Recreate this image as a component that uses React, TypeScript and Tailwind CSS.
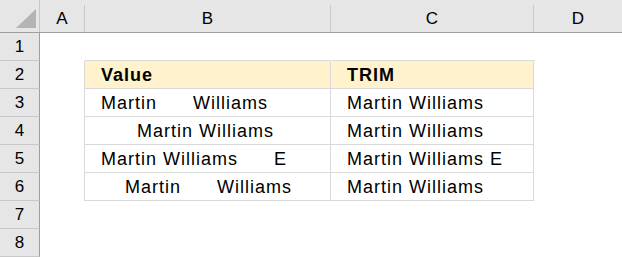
const cols = ["A", "B", "C", "D"];

const rows: { b: string; c: string; head?: boolean }[] = [
  { b: "Value", c: "TRIM", head: true },
  { b: "Martin      Williams", c: "Martin Williams" },
  { b: "      Martin Williams", c: "Martin Williams" },
  { b: "Martin Williams      E", c: "Martin Williams E" },
  { b: "    Martin      Williams", c: "Martin Williams" },
];

function RowHead({ n }: { n: number }) {
  return (
    <div className="flex h-[28px] w-[40px] shrink-0 items-center justify-center border-b border-r border-b-[#c8c8c8] border-r-[#9e9e9e] bg-[#e6e6e6] text-[17px]">
      {n}
    </div>
  );
}

export default function App() {
  return (
    <div className="h-[257px] w-[622px] overflow-hidden bg-white font-['Liberation_Sans',Arial,sans-serif] text-black">
      {/* column header */}
      <div className="flex h-[33px] border-b border-[#9e9e9e] bg-[#e6e6e6]">
        <div className="relative w-[40px] shrink-0 border-r border-[#c8c8c8]">
          <svg className="absolute left-[16px] top-[9px]" width="20" height="19" viewBox="0 0 20 19">
            <polygon points="20,0 20,19 0,19" fill="#b4b4b4" />
          </svg>
        </div>
        {cols.map((c, i) => (
          <div
            key={c}
            className={
              "mt-[5px] flex items-center justify-center text-[17px] " +
              (i === 0
                ? "w-[45px] border-r border-[#c8c8c8]"
                : i === 1
                ? "w-[246px] border-r border-[#c8c8c8]"
                : i === 2
                ? "w-[203px] border-r border-[#c8c8c8]"
                : "flex-1")
            }
          >
            {c}
          </div>
        ))}
      </div>

      {/* row 1 */}
      <div className="flex">
        <RowHead n={1} />
        <div className="w-[45px] shrink-0" />
        <div className="w-[246px] shrink-0 border-b border-[#d9d9d9]" />
        <div className="ml-[1px] w-[203px] shrink-0 border-b border-[#d9d9d9]" />
      </div>

      {rows.map((r, i) => (
        <div key={i} className="flex">
          <RowHead n={i + 2} />
          <div className="w-[45px] shrink-0 border-r border-[#d9d9d9]" />
          <div
            className={
              "flex h-[28px] w-[246px] shrink-0 items-center whitespace-pre border-b border-r border-[#d9d9d9] pl-[16px] pt-[2px] text-[18px] tracking-[1px] " +
              (r.head ? "bg-[#fff2cc] font-bold" : "")
            }
          >
            {r.b}
          </div>
          <div
            className={
              "flex h-[28px] w-[203px] shrink-0 items-center whitespace-pre border-b border-r border-[#d9d9d9] pl-[16px] pt-[2px] text-[18px] tracking-[1px] " +
              (r.head ? "bg-[#fff2cc] font-bold" : "")
            }
          >
            {r.c}
          </div>
        </div>
      ))}

      <div className="flex">
        <RowHead n={7} />
      </div>
      <div className="flex">
        <RowHead n={8} />
      </div>
    </div>
  );
}
